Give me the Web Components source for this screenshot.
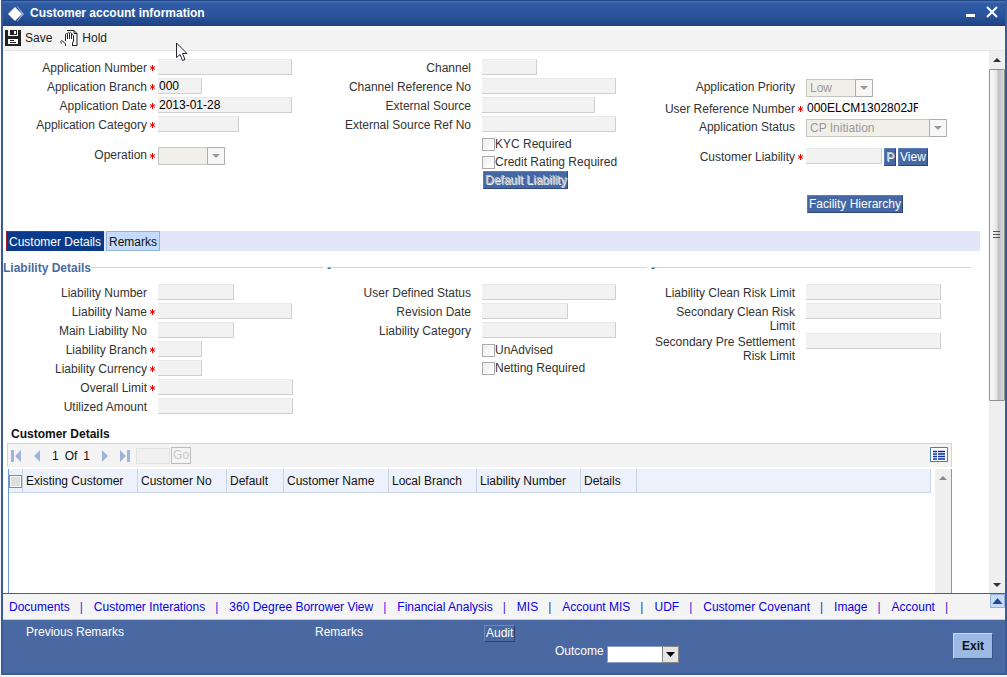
<!DOCTYPE html>
<html lang="en">
<head>
<meta charset="utf-8">
<title>Customer account information</title>
<style>
	body {
		margin: 0;
		background: #f4f6fa;
		font: 12px/14px "Liberation Sans", Arial, sans-serif;
		color: #333;
	}

	.indent {
		margin-left: 156px;
	}

	.gap-s {
		margin-top: 8px;
	}

	.gap-m {
		margin-top: 12px;
	}

	.gap-l {
		margin-top: 28px;
	}

	.lower {
		margin-top: 20px;
	}
</style>
</head>
<body>

<app-window heading="Customer account information">
	<tool-button slot="tools" label="Save">
		<svg width="16" height="16" viewBox="0 0 16 16" aria-hidden="true">
			<path fill="#222" d="M0 0h3v6h10V0h3v16H0z"></path>
			<path fill="#222" d="M5 0h7v5H5z"></path>
			<path fill="#fff" d="M9 1h2v3H9zM3 9h10v5H3z"></path>
			<path stroke="#222" d="M5 10.500h4M5 12.500h6"></path>
		</svg>
	</tool-button>
	<tool-button slot="tools" label="Hold">
		<svg width="18" height="18" viewBox="0 0 18 18" fill="none" stroke="#222" aria-hidden="true">
			<path d="M7 1.500h7l3 3v12h-4M14 1.500v3h3"></path>
			<path fill="#fff" d="M5.500 17v-2l-3-3c-2-1-2 1-1 2.500M5.500 12V6c0-2 2-2 2 0v4-5c0-2 2-2 2 0v5-5c0-2 2-2 2 0v5-3c0-2 2-2 2 0v5l-1 2v3"></path>
		</svg>
	</tool-button>

	<form-columns>
		<form-column>
			<text-field label="Application Number" required size="134"></text-field>
			<text-field label="Application Branch" required size="44" value="000"></text-field>
			<text-field label="Application Date" required size="134" value="2013-01-28"></text-field>
			<text-field label="Application Category" required size="81"></text-field>
			<select-field class="gap-m" label="Operation" required size="67"></select-field>
		</form-column>
		<form-column>
			<text-field label="Channel" size="55"></text-field>
			<text-field label="Channel Reference No" size="134"></text-field>
			<text-field label="External Source" size="113"></text-field>
			<text-field label="External Source Ref No" size="134"></text-field>
			<check-field label="KYC Required"></check-field>
			<check-field label="Credit Rating Required"></check-field>
			<push-button class="indent" disabled>Default Liability</push-button>
		</form-column>
		<form-column class="lower">
			<select-field label="Application Priority" size="67" value="Low"></select-field>
			<text-field label="User Reference Number" required editable size="113" value="000ELCM1302802JR"></text-field>
			<select-field label="Application Status" size="141" value="CP Initiation"></select-field>
			<text-field class="gap-s" label="Customer Liability" required size="76">
				<push-button disabled>P</push-button>
				<push-button>View</push-button>
			</text-field>
			<push-button class="indent gap-l">Facility Hierarchy</push-button>
		</form-column>
	</form-columns>

	<tab-strip tabs="Customer Details|Remarks"></tab-strip>

	<form-columns compact>
		<form-column heading="Liability Details">
			<text-field label="Liability Number" size="76"></text-field>
			<text-field label="Liability Name" required size="134"></text-field>
			<text-field label="Main Liability No" size="76"></text-field>
			<text-field label="Liability Branch" required size="44"></text-field>
			<text-field label="Liability Currency" required size="44"></text-field>
			<text-field label="Overall Limit" required size="135"></text-field>
			<text-field label="Utilized Amount" size="135"></text-field>
		</form-column>
		<form-column heading="-">
			<text-field label="User Defined Status" size="134"></text-field>
			<text-field label="Revision Date" size="86"></text-field>
			<text-field label="Liability Category" size="134"></text-field>
			<check-field label="UnAdvised"></check-field>
			<check-field label="Netting Required"></check-field>
		</form-column>
		<form-column heading="-">
			<text-field label="Liability Clean Risk Limit" size="135"></text-field>
			<text-field label="Secondary Clean Risk Limit" size="135"></text-field>
			<text-field label="Secondary Pre Settlement Risk Limit" size="135"></text-field>
		</form-column>
	</form-columns>

	<record-grid
		heading="Customer Details"
		columns="Existing Customer:115|Customer No:89|Default:57|Customer Name:105|Local Branch:88|Liability Number:104|Details:56"
	></record-grid>

	<link-bar
		slot="links"
		links="Documents|Customer Interations|360 Degree Borrower View|Financial Analysis|MIS|Account MIS|UDF|Customer Covenant|Image|Account"
	></link-bar>
	<status-footer slot="footer"></status-footer>
</app-window>

<script>
const attach = (element, html) => {
	const template = document.createElement('template');
	template.innerHTML = html;
	element.attachShadow({ mode: 'open' });
	element.shadowRoot.appendChild(template.content.cloneNode(true));
};

class AppWindow extends HTMLElement {

	connectedCallback() {
		attach(this, `
			<style>
				:host {
					display: flex;
					flex-direction: column;
					height: calc(100vh - 2px);
					margin-left: 1px;
					box-sizing: border-box;
					border: solid #3a5b9a;
					border-width: 0 2px 2px;
					overflow: hidden;
					background: #fff;
				}

				header {
					display: flex;
					align-items: center;
					gap: 6px;
					height: 26px;
					padding: 0 5px;
					box-sizing: border-box;
					border-top: 1px solid #20488a;
					background: linear-gradient(#4a70b4 0, #2f5ba5 3px, #2a549c 55%, #1d4283);
					color: #fff;
				}

				h1 {
					flex: 1;
					margin: 0 0 2px;
					font-size: 12px;
					line-height: 14px;
				}

				header button {
					display: flex;
					margin-bottom: 3px;
					padding: 0;
					border: 0;
					background: none;
				}

				nav {
					display: flex;
					gap: 8px;
					height: 24px;
					align-items: center;
					padding: 0 2px;
					border-bottom: 1px solid #e6e6e6;
					background: #f4f4f4;
				}

				.pane {
					display: flex;
					flex: 1;
					min-height: 0;
				}

				main {
					display: flex;
					flex-direction: column;
					flex: 1;
					min-width: 0;
					overflow: hidden;
				}

				.cursor {
					position: absolute;
					left: 176px;
					top: 42px;
				}
			</style>
			<header>
				<svg width="16" height="16" viewBox="0 0 16 16" aria-hidden="true">
					<path fill="#8fb2e0" d="M9 0l7 8-7 8z"></path>
					<path fill="#173a78" d="M9 1l5 7-5 7z"></path>
					<path fill="#fff" d="M7 1l7 7-7 7-7-7z"></path>
				</svg>
				<h1></h1>
				<button aria-label="Minimise">
					<svg width="14" height="14" viewBox="0 0 14 14"><path fill="#fff" d="M0 9h9v3H0z"></path></svg>
				</button>
				<button aria-label="Close">
					<svg width="14" height="14" viewBox="0 0 14 14"><path stroke="#fff" stroke-width="2" d="M1 2l10 10M11 2L1 12"></path></svg>
				</button>
			</header>
			<nav><slot name="tools"></slot></nav>
			<div class="pane">
				<main><slot></slot></main>
				<scroll-bar thumb></scroll-bar>
			</div>
			<slot name="links"></slot>
			<slot name="footer"></slot>
			<svg class="cursor" width="12" height="20" viewBox="0 0 12 20" aria-hidden="true">
				<path fill="#fff" stroke="#223" d="M.5 1v14.500l3.500-3 2.500 6 2.500-1-2.500-6h4.500z"></path>
			</svg>
		`);
		this.shadowRoot.querySelector('h1').textContent = this.getAttribute('heading');
	}

}

class ToolButton extends HTMLElement {

	connectedCallback() {
		attach(this, `
			<style>
				:host {
					display: block;
				}

				button {
					display: flex;
					align-items: center;
					gap: 4px;
					height: 20px;
					padding: 0;
					border: 0;
					background: none;
					font: inherit;
					color: #222;
				}
			</style>
			<button><slot></slot><span></span></button>
		`);
		this.shadowRoot.querySelector('span').textContent = this.getAttribute('label');
	}

}

class FormColumns extends HTMLElement {

	connectedCallback() {
		attach(this, `
			<style>
				:host {
					display: grid;
					grid-template-columns: repeat(3, 1fr);
					flex: none;
					min-height: 180px;
					padding: 8px 14px 0 0;
					box-sizing: border-box;
				}

				:host([compact]) {
					min-height: 0;
					padding-top: 10px;
				}
			</style>
			<slot></slot>
		`);
	}

}

class FormColumn extends HTMLElement {

	connectedCallback() {
		attach(this, `
			<style>
				:host {
					display: flex;
					flex-direction: column;
					align-items: flex-start;
					min-width: 0;
				}

				h2 {
					display: flex;
					width: 100%;
					margin: 0 0 9px;
					font-size: 12px;
					line-height: 14px;
					color: #4a6b9f;
				}

				h2::after {
					content: "";
					flex: 1;
					height: 6px;
					margin-right: 4px;
					border-bottom: 1px solid #c5d6ee;
				}
			</style>
			<slot></slot>
		`);
		if (this.hasAttribute('heading')) {
			const heading = document.createElement('h2');
			heading.textContent = this.getAttribute('heading');
			this.shadowRoot.insertBefore(heading, this.shadowRoot.querySelector('slot'));
		}
	}

}

// Label, required mark and control share the same three tracks in every field.
const fieldStyle = `
	:host {
		display: grid;
		grid-template-columns: 144px 11px auto;
		align-items: start;
		min-height: 19px;
	}

	label {
		padding-top: 2px;
		text-align: right;
	}

	.mark {
		padding: 6px 0 0 3px;
		height: 6px;
		line-height: 0;
	}
`;

const requiredMark = `
	<svg width="5" height="6" viewBox="0 0 5 6" stroke="#e00" aria-hidden="true">
		<path d="M2.500 0v6M0 1.500l5 3M5 1.500l-5 3"></path>
	</svg>
`;

class TextField extends HTMLElement {

	connectedCallback() {
		attach(this, `
			<style>
				${fieldStyle}

				div {
					display: flex;
					gap: 2px;
				}

				input {
					height: 16px;
					padding: 0 0 0 1px;
					box-sizing: border-box;
					border: 1px solid #e9e9e9;
					border-right-color: #cfcfcf;
					border-bottom-color: #cfcfcf;
					border-left-width: 0;
					border-radius: 0;
					background: #f2f2f2;
					font: inherit;
					color: #000;
				}

				:host([editable]) input {
					border-color: #f4f4f4;
					background: #fafafa;
				}
			</style>
			<label for="control"></label>
			<span class="mark">${this.hasAttribute('required') ? requiredMark : ''}</span>
			<div><input id="control" type="text"><slot></slot></div>
		`);
		const input = this.shadowRoot.querySelector('input');
		this.shadowRoot.querySelector('label').textContent = this.getAttribute('label');
		input.value = this.getAttribute('value') || '';
		input.readOnly = !this.hasAttribute('editable');
		input.style.width = `${this.getAttribute('size')}px`;
	}

}

class SelectField extends HTMLElement {

	connectedCallback() {
		attach(this, `
			<style>
				${fieldStyle}

				:host {
					min-height: 21px;
				}

				label {
					padding-top: 1px;
				}

				.box {
					display: grid;
				}

				select, .arrow {
					grid-area: 1 / 1;
				}

				select {
					width: 100%;
					height: 18px;
					padding: 0 0 0 3px;
					appearance: none;
					box-sizing: border-box;
					border: 1px solid #c6c6c2;
					border-radius: 0;
					background: #f1efea;
					font: inherit;
					color: #999;
					opacity: 1;
				}

				.arrow {
					justify-self: end;
					pointer-events: none;
				}
			</style>
			<label for="control"></label>
			<span class="mark">${this.hasAttribute('required') ? requiredMark : ''}</span>
			<div class="box">
				<select id="control" disabled><option></option></select>
				<svg class="arrow" width="18" height="18" viewBox="0 0 18 18" aria-hidden="true">
					<path fill="#f7f7f7" stroke="#adadad" d="M.5.5h17v17H.5z"></path>
					<path fill="#999" d="M5 7h8l-4 4z"></path>
				</svg>
			</div>
		`);
		this.shadowRoot.querySelector('label').textContent = this.getAttribute('label');
		this.shadowRoot.querySelector('option').textContent = this.getAttribute('value') || '';
		this.shadowRoot.querySelector('.box').style.width = `${this.getAttribute('size')}px`;
	}

}

class CheckField extends HTMLElement {

	connectedCallback() {
		attach(this, `
			<style>
				:host {
					display: flex;
					align-items: center;
					height: 18px;
					padding-left: 155px;
				}

				input {
					width: 13px;
					height: 13px;
					margin: 0;
					appearance: none;
					border: 1px solid #aaa;
					background: linear-gradient(135deg, #eee, #fff);
				}
			</style>
			<input id="control" type="checkbox">
			<label for="control"></label>
		`);
		this.shadowRoot.querySelector('label').textContent = this.getAttribute('label');
	}

}

class PushButton extends HTMLElement {

	connectedCallback() {
		attach(this, `
			<style>
				:host {
					display: block;
				}

				button {
					display: block;
					height: 18px;
					padding: 0 1px 1px;
					border: 1px solid #5c7db5;
					border-right-color: #2c477a;
					border-bottom-color: #2c477a;
					background: #4567a3;
					font: inherit;
					color: #fff;
				}

				button:disabled {
					color: #c4c4c4;
					text-shadow: 1px 1px #eee;
				}
			</style>
			<button><slot></slot></button>
		`);
		this.shadowRoot.querySelector('button').disabled = this.hasAttribute('disabled');
	}

}

class TabStrip extends HTMLElement {

	connectedCallback() {
		attach(this, `
			<style>
				:host {
					display: flex;
					gap: 2px;
					flex: none;
					margin: 0 9px 0 3px;
					background: #e1e7f6;
				}

				button {
					height: 20px;
					padding: 1px 2px 0;
					border: 1px solid #93b3dc;
					background: #c6dbf9;
					font: inherit;
					color: #111;
				}

				button[aria-selected=true] {
					border-color: #a02030 #0a3a8c #0a3a8c #a02030;
					background: #0a3a8c;
					color: #fff;
				}
			</style>
		`);
		this.getAttribute('tabs').split('|').forEach((name, index) => {
			const button = document.createElement('button');
			button.textContent = name;
			button.setAttribute('role', 'tab');
			button.setAttribute('aria-selected', index === 0);
			this.shadowRoot.appendChild(button);
		});
	}

}

class ScrollBar extends HTMLElement {

	connectedCallback() {
		attach(this, `
			<style>
				:host {
					display: flex;
					flex-direction: column;
					flex: none;
					width: 16px;
					background: #efefef;
					color: #888;
				}

				:host([thumb]) {
					color: #333;
				}

				svg {
					display: block;
					flex: none;
				}

				.thumb {
					display: flex;
					align-items: center;
					justify-content: center;
					flex: 331;
					border: 1px solid #8f8f8f;
					border-radius: 1px;
					background: linear-gradient(90deg, #fafafa, #e8e8e8 45%, #bfc0c4 60%, #dadada);
				}

				.rest {
					flex: 175;
				}
			</style>
			<svg width="16" height="18" viewBox="0 0 16 18"><path fill="currentColor" d="M8 7l4 4H4z"></path></svg>
			${this.hasAttribute('thumb') ? `
				<div class="thumb">
					<svg width="8" height="8" viewBox="0 0 8 8"><path stroke="#555" d="M0 .5h7M0 3.500h7M0 6.500h7"></path></svg>
				</div>
				<div class="rest"></div>
				<svg width="16" height="18" viewBox="0 0 16 18"><path fill="currentColor" d="M4 8h8l-4 4z"></path></svg>
			` : ''}
		`);
	}

}

class RecordGrid extends HTMLElement {

	connectedCallback() {
		attach(this, `
			<style>
				:host {
					display: flex;
					flex-direction: column;
					flex: 1;
					min-height: 0;
					margin: 10px 37px 0 4px;
					color: #111;
				}

				h2 {
					margin: 0 4px 2px;
					font-size: 12px;
					line-height: 14px;
				}

				.pager {
					display: flex;
					align-items: center;
					flex: none;
					height: 23px;
					padding: 0 3px;
					border: 1px solid #c9d6e8;
					border-bottom: 0;
					background: #f4f4f4;
				}

				.pager button {
					display: flex;
					padding: 0;
					border: 0;
					background: none;
				}

				.steps, .count {
					display: flex;
					align-items: center;
					gap: 12px;
				}

				.count {
					gap: 6px;
				}

				.pager input {
					width: 34px;
					height: 16px;
					margin: 0 1px 0 5px;
					box-sizing: border-box;
					border: 1px solid #e2e2e2;
					background: #f1f1f1;
				}

				.pager .go {
					height: 17px;
					padding: 0 1px;
					border: 1px solid #bbb;
					font: inherit;
					color: #c8c8c8;
				}

				.pager .list {
					margin: 0 0 3px auto;
				}

				.body {
					display: flex;
					gap: 4px;
					flex: 1;
					min-height: 0;
					margin: 2px 0 0 1px;
					border: solid #6b9bd8;
					border-width: 0 1px;
				}

				.records {
					flex: 1;
				}

				table {
					width: 100%;
					table-layout: fixed;
					border-collapse: separate;
					border-spacing: 0;
				}

				th {
					height: 23px;
					padding: 0 0 0 3px;
					border: solid #c8d5e8;
					border-width: 0 1px 1px 0;
					background: #edf1fc;
					font-weight: normal;
					text-align: left;
					white-space: nowrap;
				}

				th:first-child {
					width: 13px;
					padding: 0;
				}

				th input {
					display: block;
					width: 13px;
					height: 13px;
					margin: 2px 0 0;
					appearance: none;
					border: 1px solid #8a8a8a;
					background: #ddd;
					box-shadow: inset 0 0 0 1px #fff;
				}
			</style>
			<h2></h2>
			<div class="pager">
				<div class="steps">
					<button aria-label="First">
						<svg width="11" height="12" viewBox="0 0 11 12" fill="#9fb4dc"><path d="M0 0h3v12H0zM10 0v12L4 6z"></path></svg>
					</button>
					<button aria-label="Previous">
						<svg width="6" height="12" viewBox="0 0 6 12" fill="#9fb4dc"><path d="M6 0v12L0 6z"></path></svg>
					</button>
					<div class="count"><span>1</span><span>Of</span><span>1</span></div>
					<button aria-label="Next">
						<svg width="6" height="12" viewBox="0 0 6 12" fill="#9fb4dc"><path d="M0 0v12l6-6z"></path></svg>
					</button>
					<button aria-label="Last">
						<svg width="11" height="12" viewBox="0 0 11 12" fill="#9fb4dc"><path d="M7 0h3v12H7zM0 0v12l6-6z"></path></svg>
					</button>
				</div>
				<input type="text" aria-label="Page" disabled>
				<button class="go" disabled>Go</button>
				<button class="list" aria-label="Columns">
					<svg width="18" height="15" viewBox="0 0 18 15">
						<path fill="#fff" stroke="#4a7cc0" d="M.5.5h17v14H.5z"></path>
						<path stroke="#0a2fa0" stroke-width="1.500" d="M3 4.500h4M8 4.500h7M3 7h4M8 7h7M3 9.500h4M8 9.500h7M3 12h4M8 12h7"></path>
					</svg>
				</button>
			</div>
			<div class="body">
				<div class="records">
					<table>
						<thead><tr><th><input type="checkbox" aria-label="Select all"></th></tr></thead>
					</table>
				</div>
				<scroll-bar></scroll-bar>
			</div>
		`);
		this.shadowRoot.querySelector('h2').textContent = this.getAttribute('heading');

		const row = this.shadowRoot.querySelector('tr');
		this.getAttribute('columns').split('|').forEach((column) => {
			const [name, width] = column.split(':');
			const cell = document.createElement('th');
			cell.textContent = name;
			cell.style.width = `${width - 4}px`;
			row.appendChild(cell);
		});
		row.appendChild(document.createElement('th'));
	}

}

class LinkBar extends HTMLElement {

	connectedCallback() {
		attach(this, `
			<style>
				:host {
					display: flex;
					flex: none;
					justify-content: space-between;
					height: 25px;
					border-top: 1px solid #3f5f9f;
					border-bottom: 1px solid #c3cbdc;
					background: #f4f4f4;
				}

				nav {
					display: flex;
					align-items: center;
					padding-left: 6px;
					white-space: nowrap;
					color: #3a20e0;
				}

				a {
					margin-right: 10px;
					color: #0a00e6;
					text-decoration: none;
				}

				span {
					margin-right: 11px;
				}

				button {
					display: flex;
					align-self: flex-start;
					padding: 0;
					border: 0;
				}
			</style>
			<nav></nav>
			<button aria-label="Expand">
				<svg width="15" height="14" viewBox="0 0 15 14">
					<path fill="#c6dbf9" stroke="#93b3dc" d="M.5.5h14v13H.5z"></path>
					<path fill="#1d4a94" d="M7.500 4l5 6h-10z"></path>
				</svg>
			</button>
		`);
		const nav = this.shadowRoot.querySelector('nav');
		this.getAttribute('links').split('|').forEach((name) => {
			const link = document.createElement('a');
			const bar = document.createElement('span');
			link.href = '#';
			link.textContent = name;
			bar.textContent = '|';
			nav.append(link, bar);
		});
	}

}

class StatusFooter extends HTMLElement {

	connectedCallback() {
		attach(this, `
			<style>
				:host {
					display: grid;
					grid-template-columns: 289fr 169fr 71fr 438fr;
					align-items: start;
					flex: none;
					height: 53px;
					padding: 5px 12px 0 23px;
					box-sizing: border-box;
					background: #4a69a2;
					color: #fff;
				}

				button {
					padding: 0 1px 1px;
					height: 17px;
					border: 1px solid #6d8abb;
					border-right-color: #2b4474;
					border-bottom-color: #2b4474;
					background: #4a69a2;
					font: inherit;
					color: #fff;
				}

				.end {
					display: flex;
					justify-content: space-between;
				}

				.outcome {
					display: flex;
					gap: 3px;
					padding-top: 19px;
				}

				.box {
					display: grid;
					width: 72px;
					margin-top: 2px;
				}

				select, svg {
					grid-area: 1 / 1;
				}

				select {
					height: 17px;
					padding: 0;
					appearance: none;
					border: 1px solid #8aa0c8;
					border-radius: 0;
					background: #fff;
				}

				svg {
					justify-self: end;
					pointer-events: none;
				}

				.exit {
					height: 26px;
					margin-top: 8px;
					padding: 0 8px;
					border-color: #c2d6f2 #3a5685 #3a5685 #c2d6f2;
					background: #9cb9e2;
					font-weight: bold;
					color: #111;
				}
			</style>
			<span>Previous Remarks</span>
			<span>Remarks</span>
			<div><button>Audit</button></div>
			<div class="end">
				<div class="outcome">
					<label for="outcome">Outcome</label>
					<div class="box">
						<select id="outcome"><option></option></select>
						<svg width="17" height="17" viewBox="0 0 17 17" aria-hidden="true">
							<path fill="#e4e4e4" stroke="#888" d="M.5.5h16v16H.5z"></path>
							<path fill="#000" d="M4 6h9l-4.500 5z"></path>
						</svg>
					</div>
				</div>
				<button class="exit">Exit</button>
			</div>
		`);
	}

}

customElements.define('scroll-bar', ScrollBar);
customElements.define('app-window', AppWindow);
customElements.define('tool-button', ToolButton);
customElements.define('form-columns', FormColumns);
customElements.define('form-column', FormColumn);
customElements.define('text-field', TextField);
customElements.define('select-field', SelectField);
customElements.define('check-field', CheckField);
customElements.define('push-button', PushButton);
customElements.define('tab-strip', TabStrip);
customElements.define('record-grid', RecordGrid);
customElements.define('link-bar', LinkBar);
customElements.define('status-footer', StatusFooter);
</script>
</body>
</html>
